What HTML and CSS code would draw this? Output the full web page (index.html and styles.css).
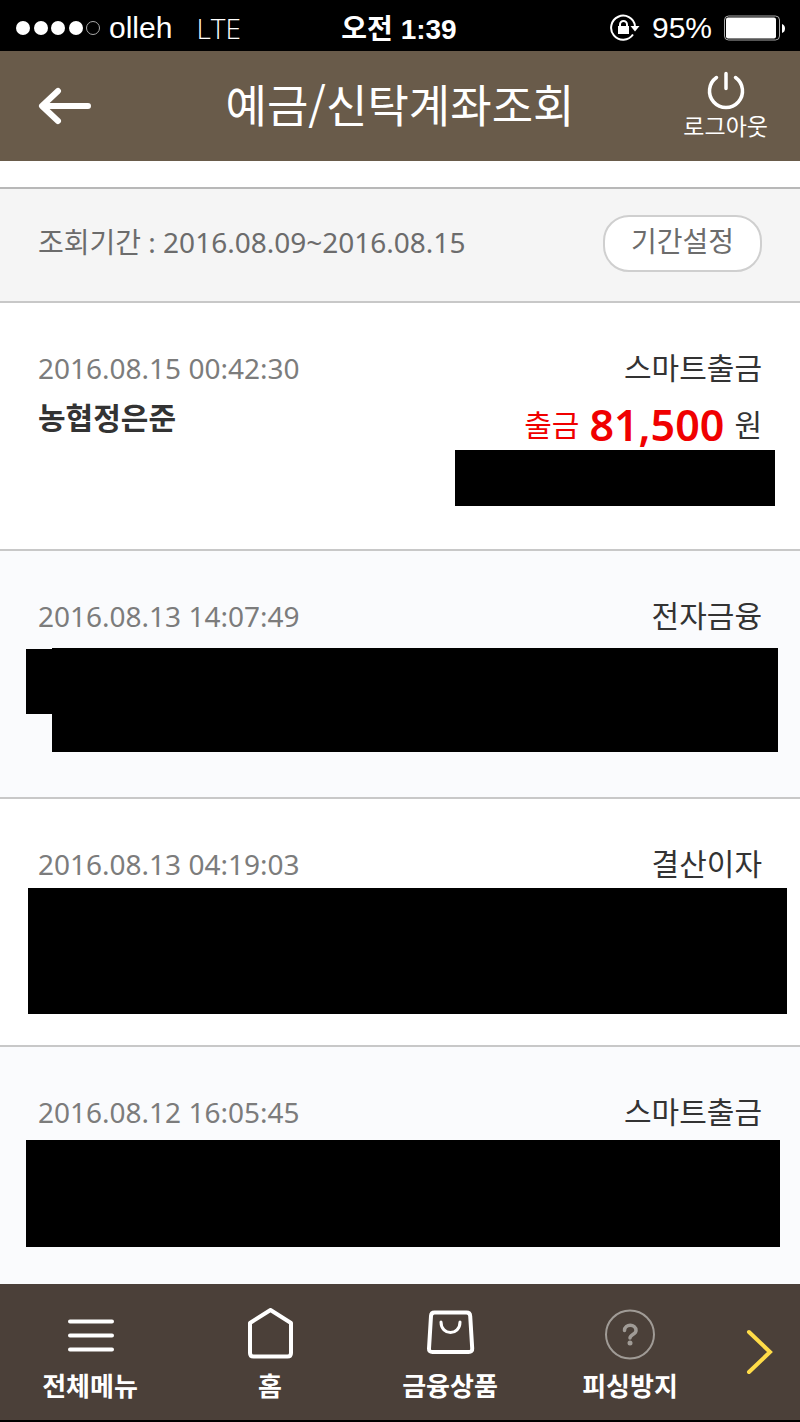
FILE: index.html
```html
<!DOCTYPE html>
<html lang="ko">

<head>
  <meta charset="UTF-8">
  <meta name="viewport" content="width=device-width, initial-scale=1.0">
  <title>예금/신탁계좌조회</title>
  <link rel="stylesheet" href="styles.css">
</head>

<body>
  <div class="status-bar">
    <div class="status-left">
      <svg class="signal" width="85" height="16" viewBox="0 0 85 16" fill="#fff">
        <circle cx="7" cy="8" r="7" />
        <circle cx="25" cy="8" r="7" />
        <circle cx="42" cy="8" r="7" />
        <circle cx="60" cy="8" r="7" />
        <circle cx="77" cy="8" r="6.5" fill="none" stroke="#aaa" />
      </svg>
      <span>olleh</span>
      <span class="network">LTE</span>
    </div>
    <div class="clock">오전 1:39</div>
    <div class="status-right">
      <svg width="30" height="28" viewBox="0 0 30 28" fill="none" stroke="#fff" stroke-width="2">
        <path d="M23 20.500A12 12 0 1 1 25 12" />
        <path d="M20.500 12h9l-4.500 5.500z" fill="#fff" stroke="none" />
        <rect x="8" y="12" width="11" height="8" fill="#fff" stroke="none" />
        <path d="M10 13v-2.500a3.500 3.500 0 0 1 7 0v2.500" />
      </svg>
      <span>95%</span>
      <svg width="62" height="26" viewBox="0 0 62 26">
        <rect x="0.5" y="1" width="55" height="24" rx="4" fill="none" stroke="#aaa" />
        <rect x="2" y="2.500" width="50" height="21" rx="2" fill="#fff" />
        <path d="M58 9q3 1 3 4.500t-3 4.500z" fill="#fff" />
      </svg>
    </div>
  </div>

  <header class="header">
    <button class="back-btn" aria-label="뒤로">
      <svg width="54" height="38" viewBox="0 0 54 38" fill="none" stroke="#fff" stroke-width="6" stroke-linecap="round" stroke-linejoin="round">
        <path d="M20 4L4 19l16 15M6 19h44" />
      </svg>
    </button>
    <h1 class="title">예금/신탁계좌조회</h1>
    <button class="logout-btn">
      <svg width="40" height="40" viewBox="0 0 40 40" fill="none" stroke="#fff" stroke-width="3.500" stroke-linecap="round">
        <path d="M10.500 7.500A16.500 16.500 0 1 0 29.500 7.500M20 3.500v15" />
      </svg>
      <span>로그아웃</span>
    </button>
  </header>

  <section class="period">
    <p class="period-text">조회기간 : 2016.08.09~2016.08.15</p>
    <button class="period-btn">기간설정</button>
  </section>

  <main class="records">
    <article class="record">
      <div class="record-row">
        <time class="date">2016.08.15 00:42:30</time>
        <span class="kind">스마트출금</span>
      </div>
      <div class="record-row detail">
        <strong class="name">농협정은준</strong>
        <p class="amount"><span class="out">출금</span><b>81,500</b><span class="won">원</span></p>
      </div>
      <div class="mask mask-balance"></div>
    </article>

    <article class="record">
      <div class="record-row">
        <time class="date">2016.08.13 14:07:49</time>
        <span class="kind">전자금융</span>
      </div>
      <div class="mask-pair">
        <div class="mask mask-tab"></div>
        <div class="mask mask-body"></div>
      </div>
    </article>

    <article class="record">
      <div class="record-row">
        <time class="date">2016.08.13 04:19:03</time>
        <span class="kind">결산이자</span>
      </div>
      <div class="mask mask-tall"></div>
    </article>

    <article class="record">
      <div class="record-row">
        <time class="date">2016.08.12 16:05:45</time>
        <span class="kind">스마트출금</span>
      </div>
      <div class="mask mask-wide"></div>
    </article>
  </main>

  <nav class="bottom-nav">
    <a href="#" class="nav-item">
      <svg width="52" height="52" viewBox="0 0 52 52" fill="none" stroke="#fff" stroke-width="4" stroke-linecap="round">
        <path d="M6 13.500h42M6 27.500h42M6 41.500h42" />
      </svg>
      <span>전체메뉴</span>
    </a>
    <a href="#" class="nav-item">
      <svg width="52" height="52" viewBox="0 0 52 52" fill="none" stroke="#fff" stroke-width="4" stroke-linejoin="round">
        <path d="M26.500 2L47 15v30q0 3.500-3.500 3.500h-34Q6 48.500 6 45V15z" />
      </svg>
      <span>홈</span>
    </a>
    <a href="#" class="nav-item">
      <svg width="52" height="52" viewBox="0 0 52 52" fill="none" stroke="#fff" stroke-width="4" stroke-linecap="round">
        <path d="M10.500 4.500h32q3.500 0 3.700 3.500l2 32.500q.2 3.500-3.500 3.500H8.500q-3.700 0-3.500-3.500L7 8q.2-3.500 3.500-3.500z" />
        <path d="M17 14c0 14 19 14 19 0" stroke-width="3" />
      </svg>
      <span>금융상품</span>
    </a>
    <a href="#" class="nav-item">
      <svg width="52" height="52" viewBox="0 0 52 52" fill="none" stroke="#a09b96" stroke-linecap="round">
        <circle cx="26" cy="26.500" r="24" stroke-width="2" />
        <path d="M20.500 22.500c0-7 11.500-7 11.500 0 0 4-6 4-6 7.500" stroke-width="3.500" />
        <circle cx="26" cy="35" r="2.500" fill="#a09b96" stroke="none" />
      </svg>
      <span>피싱방지</span>
    </a>
    <button class="next-btn" aria-label="다음">
      <svg width="28" height="48" viewBox="0 0 28 48" fill="none" stroke="#ffdc48" stroke-width="4" stroke-linecap="round">
        <path d="M3 4l21 20L3 44" />
      </svg>
    </button>
  </nav>
</body>

</html>
```
FILE: styles.css
```css
* {
  box-sizing: border-box;
}

body {
  margin: 0;
  min-height: 100vh;
  display: flex;
  flex-direction: column;
  background-color: white;
  color: #333;
  font-family: "Noto Sans", "Noto Sans CJK KR", sans-serif;
  font-size: 28px;
}

h1,
p {
  margin: 0;
}

button {
  padding: 0;
  border: none;
  background: transparent;
  color: inherit;
  font-family: inherit;
  cursor: pointer;
}

svg {
  display: block;
  flex-shrink: 0;
}

/* status bar */
.status-bar {
  display: grid;
  grid-template-columns: 1fr auto 1fr;
  align-items: center;
  height: 51px;
  padding: 2px 14px 0 16px;
  background-color: black;
  color: white;
  font-family: "Liberation Sans", "Noto Sans CJK KR", sans-serif;
  font-size: 30px;
  line-height: 48px;
}

.status-left,
.status-right {
  display: flex;
  align-items: center;
  gap: 8px;
}

.status-right {
  justify-content: flex-end;
  gap: 12px;
}

.network {
  margin-left: 16px;
  font-family: "Open Sans", sans-serif;
  font-size: 28px;
  font-weight: 300;
}

.clock {
  padding: 4px 4px 0 0;
  font-size: 28px;
  font-weight: bold;
}

/* header */
.header {
  display: grid;
  grid-template-columns: 1fr auto 1fr;
  align-items: center;
  height: 110px;
  padding: 0 32px 0 38px;
  background-color: #695b4a;
  color: white;
}

.back-btn {
  justify-self: start;
}

.title {
  padding: 0 6px 4px 0;
  font-family: "Noto Sans CJK KR", sans-serif;
  font-size: 45px;
  font-weight: normal;
  line-height: 60px;
}

.logout-btn {
  display: flex;
  flex-direction: column;
  align-items: center;
  justify-self: end;
  font-size: 23px;
  line-height: 32px;
}

/* search period */
.period {
  display: flex;
  align-items: center;
  justify-content: space-between;
  height: 116px;
  margin-top: 26px;
  padding: 0 38px 4px;
  border-top: 2px solid #b8b8b8;
  border-bottom: 2px solid #c8c8c8;
  background-color: #f5f5f5;
  color: #6c6c6c;
}

.period-text {
  padding-bottom: 4px;
}

.period-btn {
  height: 57px;
  padding: 0 26px 6px;
  border: 2px solid #cfcfcf;
  border-radius: 26px;
  background-color: white;
  font-size: 28px;
}

/* records */
.records {
  flex: 1;
  display: flex;
  flex-direction: column;
}

.record {
  min-height: 248px;
  padding: 45px 38px 0;
  border-bottom: 2px solid #c8c8c8;
}

.record:nth-child(even) {
  background-color: #fafbfd;
}

.record:last-child {
  flex: 1;
  min-height: 0;
  padding-bottom: 36px;
  border-bottom: none;
}

.record-row {
  display: flex;
  justify-content: space-between;
  line-height: 40px;
}

.date {
  color: #7c7c7c;
}

.kind,
.name,
.won,
.out {
  font-size: 30px;
}

.detail {
  height: 62px;
  line-height: 60px;
}

.amount {
  display: flex;
  align-items: center;
  gap: 10px;
  height: 74px;
}

.amount b {
  font-size: 43px;
  font-weight: 600;
}

.amount b,
.out {
  color: #f00000;
}

/* blacked out account details */
.mask {
  background-color: black;
}

.mask-balance {
  width: 320px;
  height: 56px;
  margin: 0 -13px 0 auto;
}

.mask-pair {
  display: flex;
  align-items: flex-start;
  margin: 12px -16px 0 -12px;
}

.mask-tab {
  width: 26px;
  height: 65px;
  margin-top: 1px;
}

.mask-body {
  flex: 1;
  height: 104px;
}

.mask-tall {
  height: 126px;
  margin: 4px -25px 0 -10px;
}

.mask-wide {
  height: 107px;
  margin: 8px -18px 0 -12px;
}

/* bottom navigation */
.bottom-nav {
  display: grid;
  grid-template-columns: repeat(4, 9fr) 4fr;
  height: 138px;
  border-bottom: 2px solid black;
  background-color: #4b4039;
  color: white;
}

.nav-item {
  display: flex;
  flex-direction: column;
  align-items: center;
  gap: 10px;
  padding-top: 24px;
  color: inherit;
  font-size: 26px;
  font-weight: bold;
  line-height: 32px;
  text-decoration: none;
}

.next-btn {
  display: flex;
  align-items: center;
  justify-content: center;
}
```
